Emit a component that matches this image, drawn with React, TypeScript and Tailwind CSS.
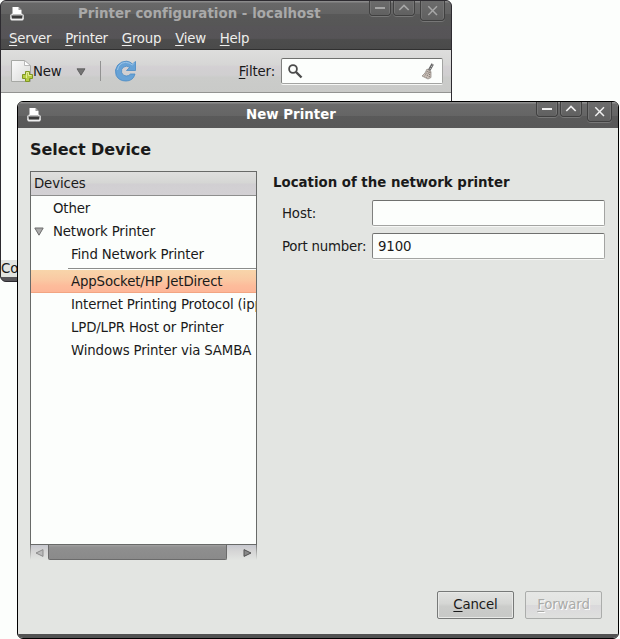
import React from "react";

function Mnemonic({ text }: { text: string }) {
  return (
    <span className="whitespace-pre">
      <span className="underline decoration-1 underline-offset-[2px] [text-decoration-skip-ink:none]">{text[0]}</span>
      {text.slice(1)}
    </span>
  );
}

function PrinterIcon() {
  return (
    <svg width="16" height="16" viewBox="0 0 16 16" className="shrink-0">
      <path d="M1 9L3 7.5H13L15 9V13H1Z" fill="#c9c9c9" />
      <path d="M3.5 1H9.5L12.5 4V9H3.5Z" fill="#fff" />
      <path d="M9.5 1V4H12.5Z" fill="#999" />
      <path d="M2.5 9.5H13.5L13 12H3Z" fill="#3a3a3a" />
      <path d="M4 8.5H12V10H4Z" fill="#808080" />
      <path d="M1.5 12.5H14.5V13.5Q14.5 14.5 13 14.5H3Q1.5 14.5 1.5 13.5Z" fill="#eee" />
      <path d="M3 12.5H13" stroke="#888" />
    </svg>
  );
}

function WindowButtons({ color }: { color: string }) {
  const base =
    "box-border rounded-b-[4px] border border-t-0 border-[#404040] bg-[linear-gradient(#6c6c6c,#606060)] shadow-[0_1px_0_#777,inset_1px_0_0_#757575,inset_-1px_0_0_#757575]";
  return (
    <div className="flex shrink-0 items-start">
      <div className={base + " h-[15px] w-[22px]"}>
        <svg width="20" height="14" viewBox="0 0 20 14" className="block">
          <path d="M5 7H15" stroke={color} strokeWidth="2" />
        </svg>
      </div>
      <div className={base + " ml-[2px] h-[15px] w-[22px]"}>
        <svg width="20" height="14" viewBox="0 0 20 14" className="block">
          <path d="M5.3 9L10 4.5L14.7 9" stroke={color} strokeWidth="1.7" fill="none" />
        </svg>
      </div>
      <div className={base + " ml-[5px] h-[20px] w-[25px]"}>
        <svg width="23" height="19" viewBox="0 0 23 19" className="block">
          <path d="M7.3 5.3L16 14M16 5.3L7.3 14" stroke={color} strokeWidth="1.5" />
        </svg>
      </div>
    </div>
  );
}

function NewPageIcon() {
  return (
    <svg width="24" height="24" viewBox="0 0 24 24" className="shrink-0">
      <defs>
        <linearGradient id="page" x1="0" y1="0" x2="1" y2="1">
          <stop offset="0" stopColor="#fbfbfb" />
          <stop offset="1" stopColor="#d9dad8" />
        </linearGradient>
      </defs>
      <path d="M1.5 1.5H14.5L20.5 7V22.5H1.5Z" fill="url(#page)" stroke="#a6a8a4" />
      <path d="M14.5 1.5V6.5H20.5Z" fill="#fff" stroke="#aaa" strokeWidth="0.8" />
      <path d="M15.5 12.5H19.5V15.5H22.5V19.5H19.5V22.5H15.5V19.5H12.5V15.5H15.5Z" fill="#b7ce45" stroke="#7f9624" />
      <path d="M16.5 19V13.5H18.5V16.5H21.5" fill="none" stroke="#e3ec98" />
    </svg>
  );
}

function RefreshIcon() {
  return (
    <svg width="24" height="24" viewBox="0 0 24 24" className="shrink-0">
      <path
        d="M21.5 2.5V11.5H12.5L15.7 8.4Q12.5 6 9.4 8.2Q6.8 10.2 7.6 13.5Q8.8 17 12.3 17Q15 17 16.5 15H21Q19.2 22 12 22Q5 22 2.2 16.5Q0 10.8 3.8 6Q7.5 2 12.5 2.2Q16 2.4 18.5 5Z"
        fill="#67a2d6"
        stroke="#4a8ac4"
        strokeWidth="0.8"
      />
      <path d="M3.5 11Q4.5 4 11.5 3.4Q15.5 3.4 18.2 6L20.5 4" fill="none" stroke="#9cc5e8" />
    </svg>
  );
}

function BroomIcon() {
  return (
    <svg width="14" height="17" viewBox="0 0 14 17" className="shrink-0">
      <path d="M11.7 1L8 7.5" stroke="#666" strokeWidth="2.6" />
      <path d="M11.7 1.5L8.5 7" stroke="#ccc" strokeWidth="1" strokeDasharray="1 1" />
      <path d="M6 6L10 8.5V14.5L7 16L1 13Q4.5 10.5 6 6Z" fill="#c8beb6" stroke="#8b847e" strokeWidth="0.7" />
      <path d="M6.5 8L3.5 13.5M8 8.5L5.5 14.5M9 9L8 15" stroke="#77706a" strokeDasharray="1 1" />
    </svg>
  );
}

const field =
  "box-border rounded-[2px] border border-[#a3a4a2] border-t-[#6f706e] border-l-[#7f807e] bg-[#fcfefc] shadow-[0_1px_0_#f6f7f5]";

function MainWindow() {
  return (
    <div className="absolute left-0 top-0 flex h-[282px] w-[452px] flex-col overflow-hidden rounded-[6px] border border-[#2d2b30] bg-[#4b4a4c]">
      <div className="flex h-[25px] shrink-0 bg-[linear-gradient(#8a8a8a_0,#8a8a8a_1px,#686868_2px,#636363_50%,#585858_52%,#565656)] pl-[8px] pr-[6px]">
        <div className="pt-[5px]"><PrinterIcon /></div>
        <div className="flex-1 whitespace-nowrap pl-[53px] text-[13.333px] font-bold leading-[26px] tracking-[0.05px] text-[#a9a9a9]">Printer configuration - localhost</div>
        <WindowButtons color="#a6a6a6" />
      </div>
      <div className="flex h-[24px] shrink-0 gap-[14px] border-b border-[#303030] bg-[linear-gradient(#575558,#565457_54%,#4d4d4d_56%,#4a4a4a)] pl-[8px] leading-[25px] tracking-[-0.25px] text-[#eeeeec]">
        <Mnemonic text="Server" /><Mnemonic text="Printer" /><Mnemonic text="Group" /><Mnemonic text="View" /><Mnemonic text="Help" />
      </div>
      <div className="flex h-[43px] shrink-0 items-center border-b border-[#929391] bg-[linear-gradient(#dededd,#d6d6d5_35%,#d3d0d3_40%,#d0cfd0_60%,#cbccca_65%,#c9cac8)] pl-[9px] pr-[8px]">
        <NewPageIcon />
        <span className="-ml-[1px] w-[29px] pt-[2px]">New</span>
        <svg width="10" height="8" viewBox="0 0 10 8" className="ml-[14px] mt-px"><path d="M1 .8H9L5 7.2Z" fill="#747474" stroke="#555" strokeWidth=".8" /></svg>
        <div className="ml-[14px] h-[20px] w-px bg-[#929292]" />
        <div className="ml-[13px]"><RefreshIcon /></div>
        <div className="ml-auto pt-[2px]"><Mnemonic text="Filter:" /></div>
        <div className={field + " ml-[6px] flex h-[26px] w-[162px] items-center justify-between pl-[6px] pr-[7px]"}>
          <svg width="15" height="15" viewBox="0 0 15 15"><circle cx="5" cy="5" r="3.9" fill="none" stroke="#4b4b4b" strokeWidth="1.8" /><path d="M8 8L13.5 13.5" stroke="#4b4b4b" strokeWidth="2.4" /></svg>
          <BroomIcon />
        </div>
      </div>
      <div className="flex-1 bg-[#fcfefc]" />
      <div className="h-[17px] shrink-0 bg-[#e3e5e2] leading-[17px]">Co</div>
      <div className="h-[4px] shrink-0 bg-[#58565a]" />
    </div>
  );
}

function DeviceTree() {
  return (
    <div className="flex h-[389px] w-[227px] shrink-0 flex-col">
      <div className="flex h-[374px] flex-col overflow-hidden whitespace-nowrap border border-[#686a68] bg-[#fcfefc] leading-[23px]">
        <div className="h-[24px] shrink-0 border-b border-[#8e8f8e] bg-[linear-gradient(#dfdfde,#d5d6d4_48%,#d1cfd2_52%,#d3d1d4)] pl-[3px] leading-[24px]">Devices</div>
        <div className="mt-px h-[23px] shrink-0 pl-[22px]">Other</div>
        <div className="flex h-[23px] shrink-0 items-center pl-[3px]">
          <svg width="10" height="9" viewBox="0 0 10 9"><path d="M.8 1H9.2L5 8.2Z" fill="#aaa" stroke="#6d6d6d" /></svg>
          <span className="ml-[9px]">Network Printer</span>
        </div>
        <div className="h-[23px] shrink-0 pl-[40px]">Find Network Printer</div>
        <div className="flex h-[4px] shrink-0 items-center pl-[37px]"><div className="mt-px h-px flex-1 bg-[#8b8d8b]" /></div>
        <div className="h-[23px] shrink-0 border-b border-[#f2a582] bg-[linear-gradient(#f8d5aa,#fac9a3_45%,#fdbc9b_70%,#fdb698)] pl-[40px]">AppSocket/HP JetDirect</div>
        <div className="h-[23px] shrink-0 pl-[40px]">Internet Printing Protocol (ipp)</div>
        <div className="h-[23px] shrink-0 pl-[40px]">LPD/LPR Host or Printer</div>
        <div className="h-[23px] shrink-0 pl-[40px]">Windows Printer via SAMBA</div>
      </div>
      <div className="flex h-[15px] bg-[linear-gradient(#c7c8cf,#d5d5d5_40%,#e2e4e1)]">
        <div className="h-full w-px bg-[linear-gradient(#777,#e3e5e2)]" />
        <div className="flex w-[17px] items-center pl-[4px]">
          <svg width="9" height="8" viewBox="0 0 9 8"><path d="M8 .6V7.4L1 4Z" fill="#bbb" stroke="#8b8b8b" /></svg>
        </div>
        <div className="w-[179px] rounded-b-[2px] border border-t-0 border-[#6b6b6b] bg-[linear-gradient(#a2a2a2,#929292_2px,#8e8e8e_5px,#8a8a8a)]" />
        <div className="flex flex-1 items-center justify-end pr-[4px]">
          <svg width="9" height="8" viewBox="0 0 9 8"><path d="M1 .6V7.4L8 4Z" fill="#888" stroke="#505050" /></svg>
        </div>
        <div className="h-full w-px bg-[linear-gradient(#777,#e3e5e2)]" />
      </div>
    </div>
  );
}

function NewPrinterDialog() {
  return (
    <div className="absolute left-[17px] top-[101px] flex h-[538px] w-[602px] flex-col overflow-hidden rounded-[6px] border border-black bg-[#e3e5e2]">
      <div className="flex h-[26px] shrink-0 bg-[linear-gradient(#8e8e8e_0,#8e8e8e_1px,#6b6b6b_2px,#656565_52%,#5a5a5a_54%,#585858)] pl-[8px] pr-[6px]">
        <div className="pt-[5px]"><PrinterIcon /></div>
        <div className="flex-1 pl-[204px] text-[13.333px] font-bold leading-[26px] tracking-[0.03px] text-white">New Printer</div>
        <WindowButtons color="#eeeeee" />
      </div>
      <div className="flex flex-1 flex-col pl-[12px] pr-[13px]">
        <h1 className="h-[43px] text-[16px] font-bold leading-[44px] tracking-[-0.06px]">Select Device</h1>
        <div className="flex gap-[16px]">
          <DeviceTree />
          <div className="flex-1">
            <h2 className="h-[29px] font-bold leading-[24px] tracking-normal">Location of the network printer</h2>
            <div className="grid grid-cols-[90px_1fr] items-center gap-y-[7px] pl-[9px]">
              <label className="pt-[2px]">Host:</label>
              <div className={field + " h-[26px]"} />
              <label className="whitespace-nowrap pt-[2px] tracking-[-0.22px]">Port number:</label>
              <div className={field + " h-[26px] pl-[5px] leading-[25px]"}>9100</div>
            </div>
          </div>
        </div>
        <div className="mt-[31px] flex justify-end gap-[11px] pr-[3px]">
          <button className="h-[28px] w-[77px] rounded-[2px] border border-[#777978] bg-[linear-gradient(#e1e2e0,#d5d6d4_45%,#cbccca_55%,#c7c8c6)] leading-[26px] shadow-[inset_0_0_0_1px_#e8e9e7]"><Mnemonic text="Cancel" /></button>
          <button className="h-[28px] w-[77px] rounded-[2px] border border-[#abadab] bg-[linear-gradient(#e6e7e5,#e2e3e1_48%,#dad9db_52%,#dfe0de)] leading-[26px] text-[#aaaba8] [text-shadow:1px_1px_0_#fff]"><Mnemonic text="Forward" /></button>
        </div>
      </div>
      <div className="h-[4px] shrink-0 bg-[#525252]" />
    </div>
  );
}

export default function App() {
  return (
    <main className="relative h-[639px] w-[620px] overflow-hidden bg-[#fcfefc] font-['DejaVu_Sans',sans-serif] text-[13.333px] tracking-[-0.15px] text-[#1a1a1a]">
      <MainWindow />
      <NewPrinterDialog />
    </main>
  );
}
